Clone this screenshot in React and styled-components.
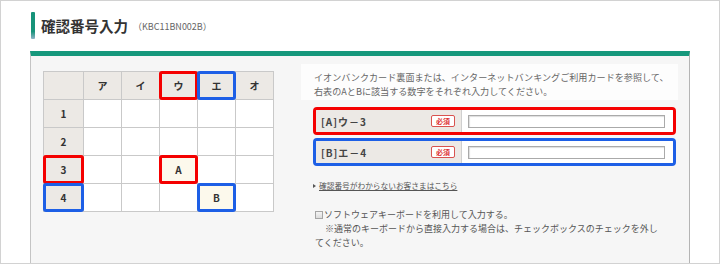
import React from "react";
import styled, { createGlobalStyle } from "styled-components";

const Global = createGlobalStyle`
  body {
    margin: 0;
    background: #fff;
    font-family: "Noto Sans CJK JP", "Noto Sans", sans-serif;
  }
`;

const Frame = styled.div`
  width: 720px;
  height: 264px;
  box-sizing: border-box;
  border: 1px solid #d2d2d2;
  padding: 11px 29px 0 29px;
  overflow: hidden;
  display: flex;
  flex-direction: column;
  background: #fff;
`;

const Heading = styled.div`
  display: flex;
  align-items: center;
  height: 27px;
  margin: 0 0 12px 1px;
  flex-shrink: 0;
`;

const Bar = styled.span`
  width: 4px;
  height: 100%;
  border-radius: 1px;
  background: linear-gradient(#17937a 0%, #17937a 72%, #8fb4c6 100%);
`;

const Title = styled.h1`
  margin: 0 0 0 6px;
  font-size: 14.5px;
  font-weight: 700;
  color: #333;
`;

const Code = styled.span`
  margin-left: 5px;
  margin-top: 2px;
  font-size: 9px;
  color: #666;
`;

const Panel = styled.div`
  flex: 1 0 auto;
  display: flex;
  align-items: flex-start;
  padding: 8px 11px 0 12px;
  border-top: 5px solid #16987c;
  border-left: 1px solid #c4c4c4;
  border-right: 1px solid #b4b4b4;
  background: #f6f6f6;
`;

const Grid = styled.div`
  display: grid;
  grid-template-columns: 40px repeat(5, 38px);
  grid-auto-rows: 28px;
  margin-top: 7px;
  border-top: 1px solid #c9c9c9;
  border-left: 1px solid #c9c9c9;
  flex-shrink: 0;
`;

const marks = { red: "#f40000", blue: "#1d5fe6" };

const Cell = styled.div`
  position: relative;
  box-sizing: border-box;
  display: flex;
  align-items: center;
  justify-content: center;
  border-right: 1px solid #c9c9c9;
  border-bottom: 1px solid #c9c9c9;
  background: ${(p) => (p.$head ? "#ece9e5" : p.$fill ? "#fcf9ec" : "#fff")};
  font-size: 10px;
  font-weight: 700;
  color: #333;

  ${(p) =>
    p.$mark &&
    `&::after {
      content: "";
      position: absolute;
      inset: -1px;
      border: 3px solid ${marks[p.$mark]};
      border-radius: 3px;
    }`}
`;

const Side = styled.div`
  width: 377px;
  margin-left: 27px;
  flex-shrink: 0;
`;

const Note = styled.p`
  margin: 0;
  height: 36px;
  box-sizing: border-box;
  padding: 6px 0 0 13px;
  background: #fdfdfd;
  font-size: 9.1px;
  line-height: 14px;
  color: #666;
  white-space: nowrap;
`;

const Rows = styled.div`
  display: flex;
  flex-direction: column;
  gap: 3px;
  margin: 7px 2px 0 12px;
`;

const Row = styled.div`
  display: flex;
  height: 28px;
  box-sizing: border-box;
  border: 3px solid ${(p) => marks[p.$mark]};
  border-radius: 4px;
  overflow: hidden;
`;

const Label = styled.div`
  width: 146px;
  box-sizing: border-box;
  display: flex;
  align-items: center;
  justify-content: space-between;
  padding: 0 6px 0 5px;
  background: #ece9e5;
  border-right: 1px solid #cfcfcf;
  font-size: 10px;
  font-weight: 700;
  letter-spacing: 1px;
  color: #444;
`;

const Badge = styled.span`
  width: 24px;
  height: 12px;
  box-sizing: border-box;
  display: flex;
  align-items: center;
  justify-content: center;
  border: 1px solid #d9534f;
  border-radius: 2px;
  background: #fff;
  font-size: 7px;
  font-weight: 700;
  letter-spacing: 0;
  color: #d33;
`;

const Field = styled.div`
  flex: 1;
  display: flex;
  align-items: center;
  padding-left: 6px;
  background: #fff;
`;

const Input = styled.input`
  width: 197px;
  height: 13px;
  box-sizing: border-box;
  margin: 0;
  padding: 0;
  border: 1px solid #aaa;
  box-shadow: inset 1px 1px 1px #ddd;
`;

const Help = styled.a`
  display: flex;
  align-items: center;
  gap: 3px;
  margin: 14px 0 0 12px;
  font-size: 7.7px;
  line-height: 12px;
  color: #555;
  text-decoration: underline;
`;

const Arrow = styled.span`
  width: 0;
  height: 0;
  border-top: 2.5px solid transparent;
  border-bottom: 2.5px solid transparent;
  border-left: 3px solid #555;
`;

const Option = styled.div`
  margin: 16px 0 0 14px;
  font-size: 9px;
  line-height: 14px;
  color: #555;
  white-space: nowrap;
`;

const Line = styled.div`
  height: 14px;
  padding-left: ${(p) => p.$pad || 0}px;
`;

const Check = styled.input`
  appearance: none;
  width: 8px;
  height: 8px;
  margin: 0 1px 0 0;
  vertical-align: -1px;
  border: 1px solid #a5a5a5;
  background: linear-gradient(#f4f4f4, #dcdcdc);
`;

const head = ["", "ア", "イ", "ウ", "エ", "オ"];
const headMarks = { 3: "red", 4: "blue" };
const rows = [
  { n: "1" },
  { n: "2" },
  { n: "3", mark: "red", col: 3, text: "A" },
  { n: "4", mark: "blue", col: 4, text: "B" },
];

export default function App() {
  return (
    <>
      <Global />
      <Frame>
        <Heading>
          <Bar />
          <Title>確認番号入力</Title>
          <Code>（KBC11BN002B）</Code>
        </Heading>
        <Panel>
          <Grid>
            {head.map((h, i) => (
              <Cell key={"h" + i} $head $mark={headMarks[i]}>
                {h}
              </Cell>
            ))}
            {rows.map((r) => (
              <React.Fragment key={r.n}>
                <Cell $head $mark={r.mark}>
                  {r.n}
                </Cell>
                {[1, 2, 3, 4, 5].map((c) => (
                  <Cell
                    key={c}
                    $fill={c === r.col}
                    $mark={c === r.col ? r.mark : undefined}
                  >
                    {c === r.col ? r.text : ""}
                  </Cell>
                ))}
              </React.Fragment>
            ))}
          </Grid>
          <Side>
            <Note>
              イオンバンクカード裏面または、インターネットバンキングご利用カードを参照して、
              <br />
              右表のAとBに該当する数字をそれぞれ入力してください。
            </Note>
            <Rows>
              <Row $mark="red">
                <Label>
                  [A]ウ－3
                  <Badge>必須</Badge>
                </Label>
                <Field>
                  <Input type="text" />
                </Field>
              </Row>
              <Row $mark="blue">
                <Label>
                  [B]エ－4
                  <Badge>必須</Badge>
                </Label>
                <Field>
                  <Input type="text" />
                </Field>
              </Row>
            </Rows>
            <Help href="#">
              <Arrow />
              確認番号がわからないお客さまはこちら
            </Help>
            <Option>
              <Line>
                <Check type="checkbox" />
                ソフトウェアキーボードを利用して入力する。
              </Line>
              <Line $pad={10}>
                ※通常のキーボードから直接入力する場合は、チェックボックスのチェックを外し
              </Line>
              <Line>てください。</Line>
            </Option>
          </Side>
        </Panel>
      </Frame>
    </>
  );
}
